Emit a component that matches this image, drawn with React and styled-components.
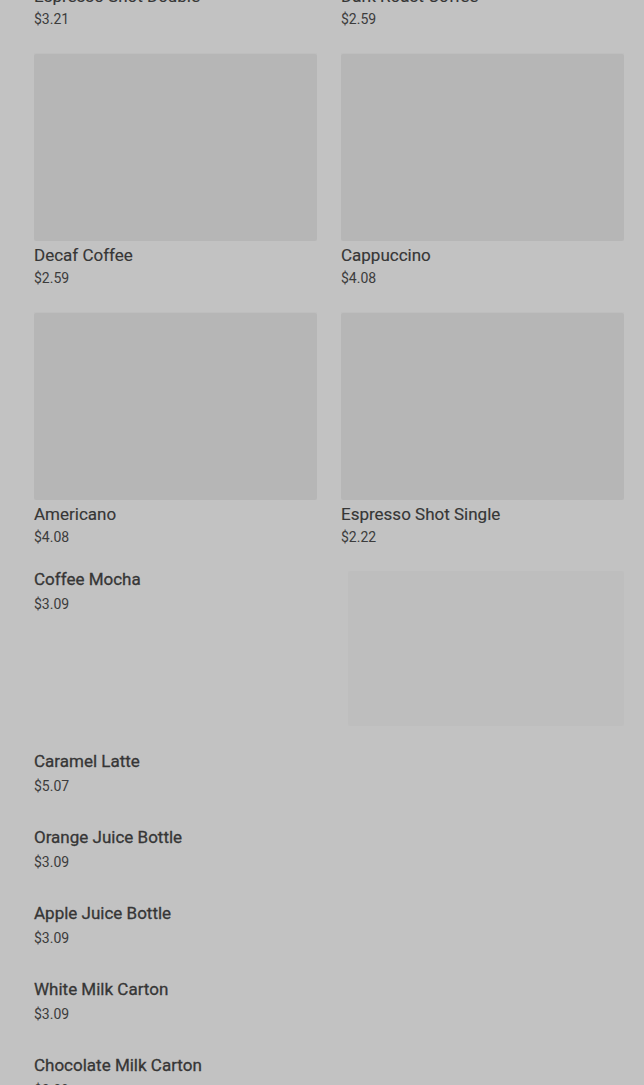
import React from "react";
import styled, { createGlobalStyle } from "styled-components";

const Global = createGlobalStyle`
  html, body { margin: 0; padding: 0; background: #c2c2c2; }
  body { font-family: Roboto, "Liberation Sans", Arial, sans-serif; color: #3c3c3c; overflow: hidden; }
`;

const Page = styled.div`
  padding: 0 20px 0 34px;
  margin-top: -206px;
`;

const Grid = styled.div`
  display: grid;
  grid-template-columns: 1fr 1fr;
  column-gap: 24px;
  row-gap: 25px;
`;

const Card = styled.div`
  display: flex;
  flex-direction: column;
`;

const Thumb = styled.div`
  height: 188px;
  background: #b6b6b6;
  border-radius: 2px;
  box-shadow: inset 0 1px 0 rgba(255,255,255,0.12);
`;

const Title = styled.div`
  font-size: 17px;
  font-weight: 400;
  line-height: 20px;
  color: #363636;
  -webkit-text-stroke: ${(p) => (p.$tight ? "0.15px" : "0.3px")} #363636;
  margin-top: ${(p) => (p.$tight ? "4px" : "0")};
`;

const Price = styled.div`
  font-size: 14px;
  line-height: 18px;
  color: #3c3c3c;
  margin-top: ${(p) => (p.$tight ? "4px" : "6px")};
`;

const List = styled.div`
  margin-top: 23px;
  display: flex;
  flex-direction: column;
  gap: 32px;
`;

const Item = styled.div`
  display: flex;
  align-items: flex-start;
`;

const ItemText = styled.div`
  flex: 1;
`;

const ItemImage = styled.div`
  width: 276px;
  height: 155px;
  margin: 2px 0 -7px;
  background: #bebebe;
  border-radius: 2px;
`;

const cards = [
  ["Espresso Shot Double", "$3.21"],
  ["Dark Roast Coffee", "$2.59"],
  ["Decaf Coffee", "$2.59"],
  ["Cappuccino", "$4.08"],
  ["Americano", "$4.08"],
  ["Espresso Shot Single", "$2.22"],
];

const items = [
  ["Coffee Mocha", "$3.09", true],
  ["Caramel Latte", "$5.07"],
  ["Orange Juice Bottle", "$3.09"],
  ["Apple Juice Bottle", "$3.09"],
  ["White Milk Carton", "$3.09"],
  ["Chocolate Milk Carton", "$3.09"],
];

export default function App() {
  return (
    <>
      <Global />
      <Page>
        <Grid>
          {cards.map(([n, p]) => (
            <Card key={n}>
              <Thumb />
              <Title $tight>{n}</Title>
              <Price $tight>{p}</Price>
            </Card>
          ))}
        </Grid>
        <List>
          {items.map(([n, p, img]) => (
            <Item key={n}>
              <ItemText>
                <Title>{n}</Title>
                <Price>{p}</Price>
              </ItemText>
              {img && <ItemImage />}
            </Item>
          ))}
        </List>
      </Page>
    </>
  );
}
